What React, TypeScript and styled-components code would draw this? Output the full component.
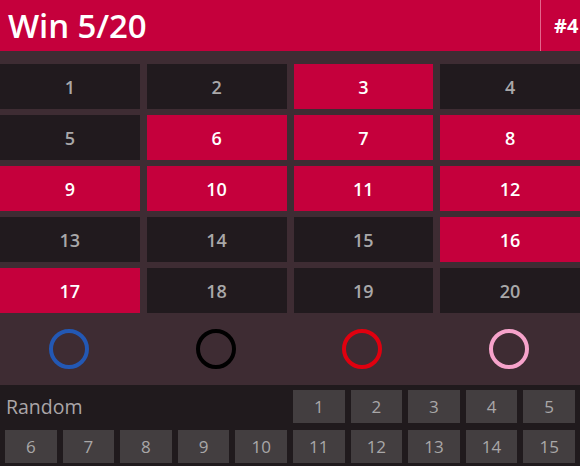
import React from "react";
import styled, { createGlobalStyle } from "styled-components";

const Global = createGlobalStyle`
  html, body { margin: 0; padding: 0; background: #201a1d; }
  body { width: 580px; height: 466px; overflow: hidden; font-family: "Open Sans", "Noto Sans", sans-serif; }
`;

const App_ = styled.div`
  width: 580px;
  height: 466px;
  overflow: hidden;
  display: flex;
  flex-direction: column;
  background: #201a1d;
`;

const Header = styled.header`
  height: 51px;
  flex: none;
  display: flex;
  align-items: center;
  background: #c5003c;
  color: #fff;
`;

const Title = styled.h1`
  flex: 1;
  margin: 0;
  padding-left: 8px;
  font-size: 33px;
  font-weight: 600;
  line-height: 51px;
  letter-spacing: -0.1px;
`;

const RoundTag = styled.div`
  height: 51px;
  display: flex;
  align-items: center;
  border-left: 1px solid #e4668c;
  padding-left: 13px;
  width: 26px;
  font-size: 20px;
  font-weight: 700;
  white-space: nowrap;
  overflow: hidden;
  margin-bottom: 1px;
`;

const Board = styled.div`
  background: #3e2c33;
  padding-top: 13px;
  display: grid;
  grid-template-columns: repeat(4, 1fr);
  grid-auto-rows: 45px;
  gap: 6px 7px;
`;

const Cell = styled.div<{ $hit: boolean }>`
  display: flex;
  align-items: center;
  justify-content: center;
  background: ${(p) => (p.$hit ? "#c5003c" : "#211a1e")};
  color: ${(p) => (p.$hit ? "#ffffff" : "#a9a8a9")};
  font-size: 18px;
  font-weight: 600;
`;

const Markers = styled.div`
  background: #3e2c33;
  height: 72px;
  display: grid;
  grid-template-columns: repeat(4, 1fr);
  column-gap: 7px;
  align-items: center;
  justify-items: center;
`;

const Ring = styled.div<{ $color: string }>`
  width: 32px;
  height: 32px;
  border-radius: 50%;
  border: 4px solid ${(p) => p.$color};
  margin-right: 2px;
`;

const Picker = styled.div`
  padding: 5px 0 0 5px;
  display: grid;
  grid-template-columns: repeat(10, 51.6px);
  grid-auto-rows: 33px;
  gap: 7px 6px;
`;

const RandomLabel = styled.div`
  grid-column: span 5;
  display: flex;
  align-items: center;
  padding-left: 1px;
  color: #aba6a8;
  font-size: 19.5px;
`;

const PickButton = styled.div`
  display: flex;
  align-items: center;
  justify-content: center;
  background: #433e40;
  color: #a9a7a8;
  font-size: 17px;
`;

const hits = new Set([3, 6, 7, 8, 9, 10, 11, 12, 16, 17]);
const ringColors = ["#2358b4", "#000000", "#e0000f", "#f6a3cb"];

export default function App() {
  const nums = Array.from({ length: 20 }, (_, i) => i + 1);
  return (
    <App_>
      <Global />
      <Header>
        <Title>Win 5/20</Title>
        <RoundTag>#4</RoundTag>
      </Header>
      <Board>
        {nums.map((n) => (
          <Cell key={n} $hit={hits.has(n)}>
            {n}
          </Cell>
        ))}
      </Board>
      <Markers>
        {ringColors.map((c) => (
          <Ring key={c} $color={c} />
        ))}
      </Markers>
      <Picker>
        <RandomLabel>Random</RandomLabel>
        {Array.from({ length: 15 }, (_, i) => i + 1).map((n) => (
          <PickButton key={n}>{n}</PickButton>
        ))}
      </Picker>
    </App_>
  );
}
